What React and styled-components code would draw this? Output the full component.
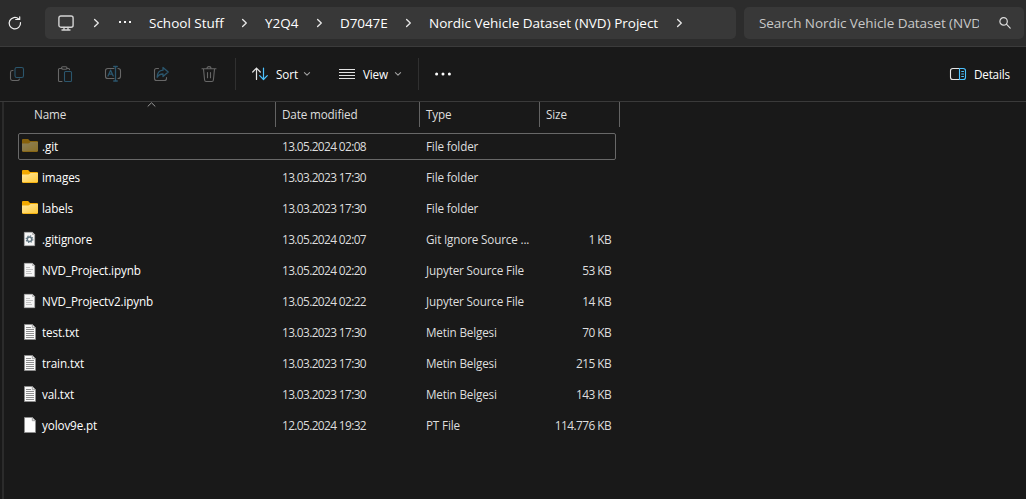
import React from "react";
import styled, { createGlobalStyle } from "styled-components";

const GlobalStyle = createGlobalStyle`
  * { box-sizing: border-box; }
  html, body { margin: 0; background: #191919; overflow: hidden; }
  body { font-family: "Open Sans", "Noto Sans", sans-serif; color: #fff; }
  svg { display: block; flex: none; overflow: visible; }
`;

const Window = styled.div`
  width: 1026px;
  height: 499px;
  display: flex;
  flex-direction: column;
  background: #191919;
`;

const AddressBar = styled.header`
  height: 47px;
  flex: none;
  display: flex;
  align-items: flex-start;
  padding: 7px 2px 0 7px;
  background: #2c2c2c;
  border-bottom: 1px solid #3b3b3b;
`;

const Refresh = styled.div`
  width: 38px;
  height: 32px;
  display: flex;
  align-items: center;
`;

const Field = styled.div`
  height: 32px;
  display: flex;
  align-items: center;
  background: #383838;
  border-radius: 5px;
`;

const Breadcrumbs = styled(Field)`
  width: 691px;
  padding-left: 13px;
`;

const Crumb = styled.span`
  width: ${(p) => p.$width}px;
  flex: none;
  margin-right: 18px;
  white-space: nowrap;
  font-size: 13.5px;
  line-height: 32px;
  letter-spacing: ${(p) => p.$spacing || 0}px;
`;

const CrumbArrow = styled.span`
  width: 5px;
  margin-right: 18px;
`;

const DeviceCrumb = styled.div`
  width: 36px;
`;

const OverflowCrumb = styled.div`
  margin: 0 18px 0 20px;
`;

const Search = styled(Field)`
  width: 280px;
  margin-left: 8px;
  padding-left: 15px;
`;

const SearchText = styled.span`
  width: 220px;
  overflow: hidden;
  white-space: nowrap;
  color: #c8c8c8;
  font-size: 13.5px;
  line-height: 32px;
  letter-spacing: -0.06px;
  margin-right: 20px;
`;

const CommandBar = styled.div`
  height: 55px;
  flex: none;
  display: flex;
  align-items: center;
  padding: 0 17px 0 9px;
  border-bottom: 1px solid #3a3a3a;
`;

const Actions = styled.div`
  display: flex;
  gap: 32px;
`;

const Divider = styled.div`
  width: 1px;
  height: 32px;
  margin: 0 16px 0 ${(p) => p.$before}px;
  background: #303030;
`;

const Command = styled.div`
  display: flex;
  align-items: center;
  gap: 8px;
  margin-right: ${(p) => p.$after || 0}px;
  margin-left: ${(p) => (p.$end ? "auto" : "0")};
`;

const Label = styled.span`
  width: ${(p) => p.$width}px;
  white-space: nowrap;
  font-size: 11.7px;
  line-height: 16px;
  letter-spacing: ${(p) => p.$spacing || 0}px;
`;

const Caret = styled.span`
  margin-left: -2px;
`;

const Body = styled.main`
  flex: 1;
  display: flex;
`;

const PaneEdge = styled.div`
  width: 4px;
  border-right: 2px solid #2b2b2b;
`;

const Table = styled.div`
  width: 620px;
`;

const HeaderRow = styled.div`
  height: 25px;
  display: flex;
  margin-bottom: 6px;
`;

const HeaderCell = styled.div`
  position: relative;
  width: ${(p) => p.$width}px;
  padding-left: ${(p) => p.$pad || 6}px;
  border-right: 1px solid #636363;
  color: #dedede;
  font-size: 11.7px;
  line-height: 24px;
  letter-spacing: -0.14px;
`;

const SortMark = styled.span`
  position: absolute;
  left: 143px;
  top: 0;
`;

const Row = styled.div`
  height: 27px;
  width: 598px;
  margin: 0 0 4px 14px;
  display: flex;
  align-items: center;
  border: 1px solid ${(p) => (p.$focused ? "#686868" : "transparent")};
  border-radius: 2px;
  font-size: 11.7px;
  line-height: 25px;
  white-space: nowrap;
`;

const IconCell = styled.div`
  width: 23px;
  height: 17px;
  margin-top: -2px;
  padding-left: 3px;
  opacity: ${(p) => (p.$hidden ? 0.5 : 1)};
`;

const NameCell = styled.div`
  width: 240px;
  letter-spacing: -0.12px;
`;

const DateCell = styled.div`
  width: 144px;
  color: #dedede;
  font-size: 11.9px;
  letter-spacing: -0.63px;
`;

const TypeCell = styled.div`
  width: 110px;
  color: #dedede;
  letter-spacing: -0.16px;
`;

const SizeCell = styled.div`
  width: 76px;
  padding-right: 1px;
  color: #dedede;
  text-align: right;
  font-size: 11.9px;
  letter-spacing: -0.58px;
`;

const line = { fill: "none", strokeLinecap: "round", strokeLinejoin: "round" };
const GREY = "#676767";
const BLUE = "#2b566d";

const RefreshIcon = () => (
  <svg width="16" height="16" viewBox="0 0 16 16" {...line} stroke="#f0f0f0" strokeWidth="1.2">
    <path d="M13.5 7.6A5.7 5.7 0 1 1 11.7 4M8.7 4.5h4V1.8" />
  </svg>
);

const MonitorIcon = () => (
  <svg width="16" height="16" viewBox="0 0 16 16" {...line} stroke="#d4d4d4" strokeWidth="1.4">
    <rect x=".9" y="1" width="14.2" height="11.2" rx="2" />
    <path d="M6 12.5v2.2M10 12.5v2.2M4 15h8" />
  </svg>
);

const ArrowIcon = () => (
  <svg width="5" height="8" viewBox="0 0 5 8" {...line} stroke="#e8e8e8" strokeWidth="1.3">
    <path d="M.6.5 4.3 4 .6 7.5" />
  </svg>
);

const CaretIcon = () => (
  <svg width="6" height="4" viewBox="0 0 6 4" {...line} stroke="#a0a0a0" strokeWidth="1.1">
    <path d="M.4.6 3 3.2 5.6.6" />
  </svg>
);

const CrumbDots = () => (
  <svg width="12" height="4" viewBox="0 0 12 4" fill="#f4f4f4">
    <path d="M0 0h2v2H0zM5 0h2v2H5zM10 0h2v2h-2z" />
  </svg>
);

const SearchIcon = () => (
  <svg width="12" height="12" viewBox="0 0 12 12" {...line} stroke="#dddddd" strokeWidth="1.2">
    <circle cx="4.6" cy="4.4" r="3.7" />
    <path d="m7.4 7.2 3.8 3.9" />
  </svg>
);

const CopyIcon = () => (
  <svg width="16" height="16" viewBox="0 0 16 16" {...line} strokeWidth="1.1">
    <path stroke={GREY} d="M4 4.500h-.6C2.200 4.500 1.500 5.300 1.500 6.400v6.200c0 1.200.7 1.900 1.900 1.900h5c1.100 0 1.800-.4 2-1.400" />
    <rect x="6" y="1.500" width="8.500" height="10" rx="1.800" stroke={BLUE} />
  </svg>
);

const PasteIcon = () => (
  <svg width="16" height="16" viewBox="0 0 16 16" {...line} strokeWidth="1.1">
    <path stroke={GREY} d="M5 2.500H2.600c-.7 0-1.100.4-1.100 1.100v10.800c0 .7.4 1.100 1.100 1.100H5M10 2.500h1.400c.7 0 1.100.4 1.100 1.100" />
    <rect x="4.500" y=".8" width="5.500" height="2.500" rx="1.200" stroke={GREY} />
    <rect x="7.500" y="5.500" width="7" height="10" rx="1" stroke={BLUE} />
  </svg>
);

const RenameIcon = () => (
  <svg width="16" height="16" viewBox="0 0 16 16" {...line} strokeWidth="1.1">
    <path stroke={GREY} d="M9 2.500H2.800C1.400 2.500.500 3.400.500 4.800v5.400c0 1.400.9 2.300 2.300 2.300H9M13 2.500c1.600 0 2.500.9 2.500 2.300v5.400c0 1.400-.9 2.300-2.500 2.300" />
    <path stroke={BLUE} strokeWidth="1.300" d="m3 10 2.600-5.800L8.200 10M3.900 8.200h3.400M10.500.5v14.500M8.700.5h3.600M8.700 15h3.600" />
  </svg>
);

const ShareIcon = () => (
  <svg width="16" height="16" viewBox="0 0 16 16" {...line} strokeWidth="1.1">
    <path stroke={GREY} d="M5.500 2.500h-2c-1.200 0-2 .8-2 2v8c0 1.200.8 2 2 2h8c1.200 0 2-.8 2-2v-1" />
    <path stroke={BLUE} strokeWidth="1.300" d="M10 1.500 15.200 6l-5.200 4.500V8C7 8 5.300 9 4.200 11.300 4.200 7.200 6.300 4.500 10 4.200z" />
  </svg>
);

const TrashIcon = () => (
  <svg width="16" height="16" viewBox="0 0 16 16" {...line} stroke={GREY} strokeWidth="1.1">
    <path d="M1 2.700h14M6 2.500C6 1.300 6.800.6 8 .6s2 .7 2 1.900M2.500 3l1.100 11c.1 1 .6 1.500 1.500 1.500h5.800c.9 0 1.400-.5 1.500-1.500L13.500 3M6.500 6.500v5.300M9.500 6.500v5.300" />
  </svg>
);

const SortIcon = () => (
  <svg width="16" height="14" viewBox="0 0 16 14" {...line} strokeWidth="1.2">
    <path stroke="#e4e4e4" d="M4.500 12.500V1.200M.7 5 4.500 1.100 8.300 5" />
    <path stroke="#4cc2ff" d="M11.500 1v11.400M7.700 8.600l3.800 3.900 3.800-3.900" />
  </svg>
);

const ViewIcon = () => (
  <svg width="16" height="11" viewBox="0 0 16 11" fill="#e2e2e2">
    <path d="M0 0h16v1H0zM0 3h16v1H0zM0 6h16v1H0zM0 9h16v1H0z" />
  </svg>
);

const MoreIcon = () => (
  <svg width="16" height="4" viewBox="0 0 16 4" fill="#fff">
    <circle cx="1.600" cy="2" r="1.500" />
    <circle cx="8" cy="2" r="1.500" />
    <circle cx="14.400" cy="2" r="1.500" />
  </svg>
);

const DetailsIcon = () => (
  <svg width="16" height="12" viewBox="0 0 16 12" {...line} strokeWidth="1.100">
    <path stroke="#e4e4e4" d="M9 .5H2.800C1.400.5.500 1.400.500 2.800v6.400c0 1.400.9 2.300 2.300 2.300H9" />
    <path stroke="#4cc2ff" d="M9.500.5h3.700c1.400 0 2.300.9 2.300 2.300v6.400c0 1.400-.9 2.300-2.300 2.300H9.500zM11.700 3.500h1.800M11.700 6h1.800M11.700 8.500h1.800" />
  </svg>
);

const FolderIcon = () => (
  <svg width="16" height="17" viewBox="0 0 16 17">
    <defs>
      <linearGradient id="folder" x1="0" y1="0" x2="1" y2="1">
        <stop offset="0" stopColor="#ffe9a2" />
        <stop offset="1" stopColor="#ffc937" />
      </linearGradient>
    </defs>
    <path fill="#f2a900" d="M0 3.200C0 2.500.5 2 1.200 2h4.300c.5 0 .8.100 1.100.4L8 4h6.800C15.500 4 16 4.500 16 5.200v8.600c0 .7-.5 1.200-1.200 1.200H1.200C.5 15 0 14.500 0 13.800z" />
    <path fill="url(#folder)" d="M0 6.600h6.300c.5 0 .8-.2 1.100-.5L8.600 5H16v8.200c0 .6-.4 1-1 1H1c-.6 0-1-.4-1-1z" />
  </svg>
);

const ConfigIcon = () => (
  <svg width="16" height="17" viewBox="0 0 16 17">
    <path fill="#f6f6f6" stroke="#a5a5a5" strokeWidth=".6" d="M2.300 2.300h8.200l2.200 2.200v11.200H2.300z" />
    <path fill="#bababa" d="M10 2v3h3z" />
    <circle cx="7.500" cy="9.200" r="3.300" fill="none" stroke="#617681" strokeWidth="1.200" strokeDasharray="1.300 1.290" />
    <circle cx="7.500" cy="9.200" r="2.200" fill="none" stroke="#617681" strokeWidth="1.400" />
  </svg>
);

const NotebookIcon = () => (
  <svg width="16" height="17" viewBox="0 0 16 17">
    <path fill="#f6f6f6" stroke="#a5a5a5" strokeWidth=".6" d="M2.300 2.300h8.200l2.200 2.200v11.200H2.300z" />
    <path fill="#bababa" d="M10 2v3h3z" />
    <path stroke="#b8b8b8" strokeWidth=".8" d="M4 6.500h4M4 8.500h7M4 10.500h5M4 12.500h6" />
  </svg>
);

const TextIcon = () => (
  <svg width="16" height="17" viewBox="0 0 16 17">
    <path fill="#fafafa" stroke="#8d8d8d" d="M2.500 1.500h7.800l3.200 3.200v11.800h-11z" />
    <path fill="#fafafa" stroke="#8d8d8d" strokeWidth=".8" d="M10.300 1.500v3.200h3.200z" />
    <path stroke="#8e8e8e" d="M4 4.500h5M4 6.500h8M4 8.500h8M4 10.500h8M4 12.500h8M4 14.500h8" />
  </svg>
);

const BlankIcon = () => (
  <svg width="16" height="17" viewBox="0 0 16 17">
    <path fill="#fcfcfc" stroke="#8d8d8d" d="M2.500 1.500h7.800l3.200 3.200v11.800h-11z" />
    <path fill="#e8e8e8" stroke="#8d8d8d" strokeWidth=".8" d="M10.300 1.500v3.200h3.200z" />
  </svg>
);

const FILE_ICONS = {
  folder: FolderIcon,
  config: ConfigIcon,
  notebook: NotebookIcon,
  text: TextIcon,
  blank: BlankIcon,
};

const CRUMBS = [
  { text: "School Stuff", width: 75, spacing: 0 },
  { text: "Y2Q4", width: 34, spacing: 0 },
  { text: "D7047E", width: 48, spacing: -0.1 },
  { text: "Nordic Vehicle Dataset (NVD) Project", width: 230, spacing: 0 },
];

const FILES = [
  { icon: "folder", name: ".git", date: "13.05.2024 02:08", type: "File folder", hidden: true },
  { icon: "folder", name: "images", date: "13.03.2023 17:30", type: "File folder" },
  { icon: "folder", name: "labels", date: "13.03.2023 17:30", type: "File folder" },
  { icon: "config", name: ".gitignore", date: "13.05.2024 02:07", type: "Git Ignore Source ...", size: "1 KB" },
  { icon: "notebook", name: "NVD_Project.ipynb", date: "13.05.2024 02:20", type: "Jupyter Source File", size: "53 KB" },
  { icon: "notebook", name: "NVD_Projectv2.ipynb", date: "13.05.2024 02:22", type: "Jupyter Source File", size: "14 KB" },
  { icon: "text", name: "test.txt", date: "13.03.2023 17:30", type: "Metin Belgesi", size: "70 KB" },
  { icon: "text", name: "train.txt", date: "13.03.2023 17:30", type: "Metin Belgesi", size: "215 KB" },
  { icon: "text", name: "val.txt", date: "13.03.2023 17:30", type: "Metin Belgesi", size: "143 KB" },
  { icon: "blank", name: "yolov9e.pt", date: "12.05.2024 19:32", type: "PT File", size: "114.776 KB" },
];

function FileRow({ file }) {
  const Icon = FILE_ICONS[file.icon];
  return (
    <Row $focused={file.hidden}>
      <IconCell $hidden={file.hidden}><Icon /></IconCell>
      <NameCell>{file.name}</NameCell>
      <DateCell>{file.date}</DateCell>
      <TypeCell>{file.type}</TypeCell>
      <SizeCell>{file.size}</SizeCell>
    </Row>
  );
}

export default function App() {
  return (
    <Window>
      <GlobalStyle />
      <AddressBar>
        <Refresh><RefreshIcon /></Refresh>
        <Breadcrumbs>
          <DeviceCrumb><MonitorIcon /></DeviceCrumb>
          <ArrowIcon />
          <OverflowCrumb><CrumbDots /></OverflowCrumb>
          {CRUMBS.map((c) => (
            <React.Fragment key={c.text}>
              <Crumb $width={c.width} $spacing={c.spacing}>{c.text}</Crumb>
              <CrumbArrow><ArrowIcon /></CrumbArrow>
            </React.Fragment>
          ))}
        </Breadcrumbs>
        <Search>
          <SearchText>Search Nordic Vehicle Dataset (NVD) Project</SearchText>
          <SearchIcon />
        </Search>
      </AddressBar>
      <CommandBar>
        <Actions>
          <CopyIcon />
          <PasteIcon />
          <RenameIcon />
          <ShareIcon />
          <TrashIcon />
        </Actions>
        <Divider $before={18} />
        <Command $after={29}>
          <SortIcon />
          <Label $width={22} $spacing={-0.1}>Sort</Label>
          <Caret><CaretIcon /></Caret>
        </Command>
        <Command>
          <ViewIcon />
          <Label $width={26} $spacing={-0.15}>View</Label>
          <Caret><CaretIcon /></Caret>
        </Command>
        <Divider $before={17} />
        <MoreIcon />
        <Command $end>
          <DetailsIcon />
          <Label $width={35} $spacing={-0.2}>Details</Label>
        </Command>
      </CommandBar>
      <Body>
        <PaneEdge />
        <Table>
          <HeaderRow>
            <HeaderCell $width={272} $pad={30}>
              Name
              <SortMark>
                <svg width="9" height="5" viewBox="0 0 9 5" {...line} stroke="#9a9a9a">
                  <path d="M1 4.200 4.500.800 8 4.200" />
                </svg>
              </SortMark>
            </HeaderCell>
            <HeaderCell $width={144}>Date modified</HeaderCell>
            <HeaderCell $width={120}>Type</HeaderCell>
            <HeaderCell $width={80}>Size</HeaderCell>
          </HeaderRow>
          {FILES.map((file) => <FileRow key={file.name} file={file} />)}
        </Table>
      </Body>
    </Window>
  );
}
